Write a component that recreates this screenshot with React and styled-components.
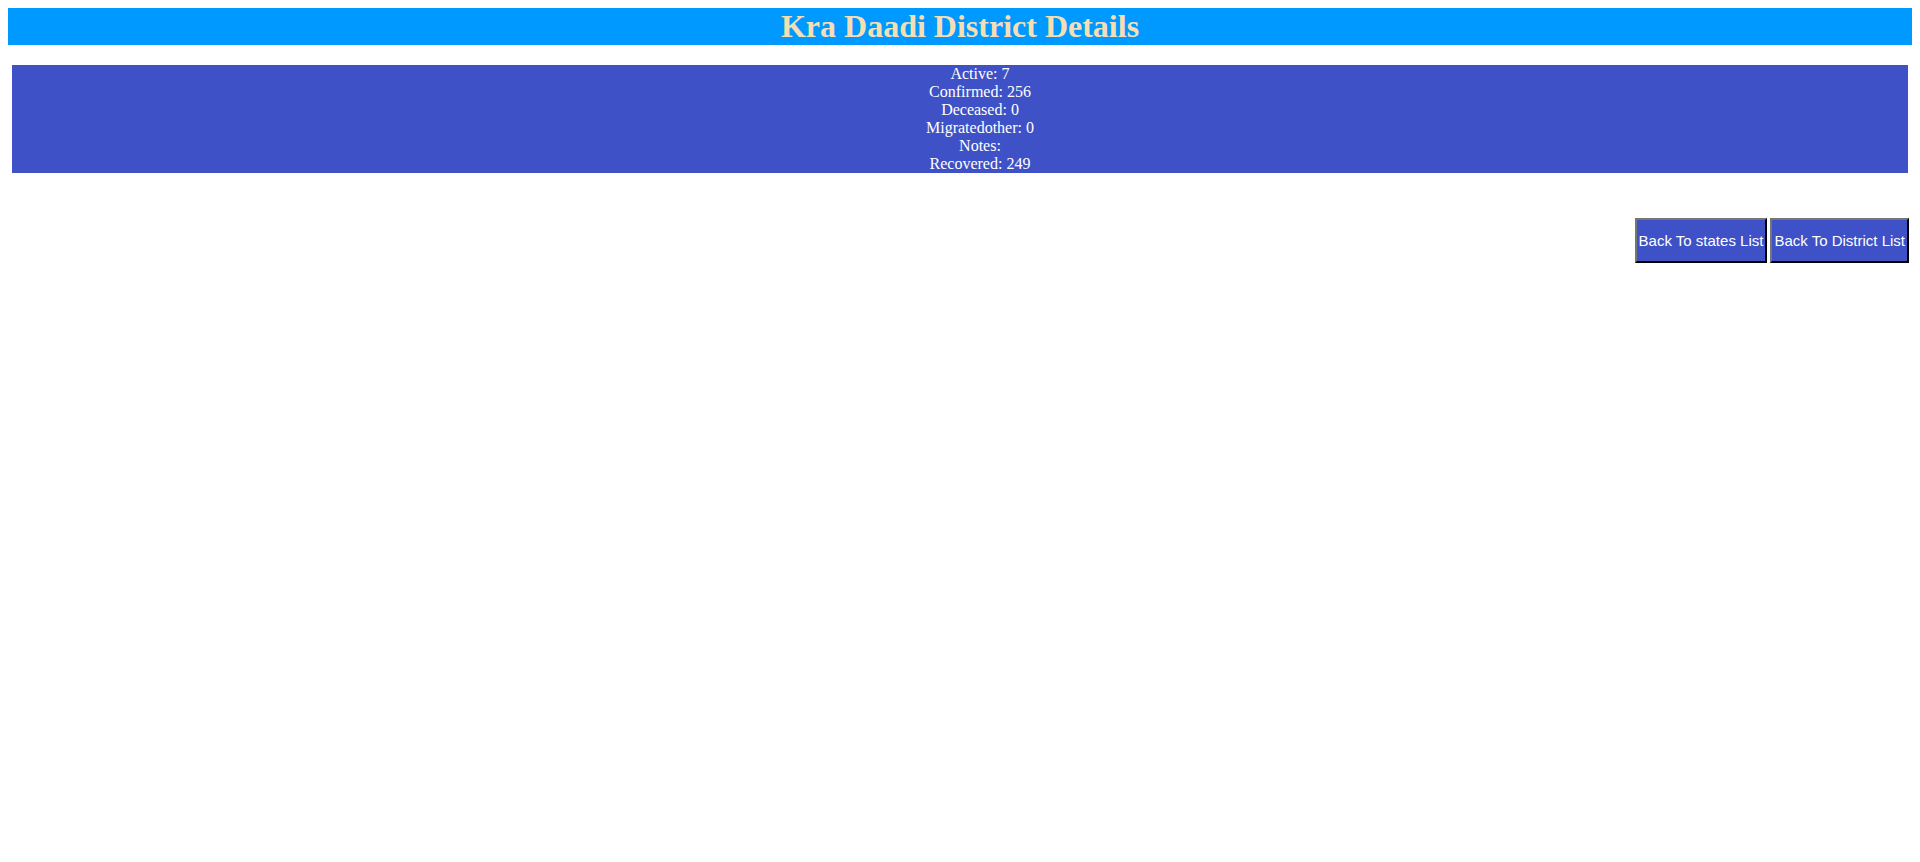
import styled, { createGlobalStyle } from 'styled-components';

const GlobalStyle = createGlobalStyle`
  body {
    margin: 8px;
    background: #ffffff;
    font-family: "Liberation Serif", "Times New Roman", serif;
  }
`;

const Header = styled.h1`
  margin: 0;
  height: 37px;
  line-height: 37px;
  background: #0099ff;
  color: #f5deb3;
  font-size: 32px;
  font-weight: 700;
  text-align: center;
`;

const StatsList = styled.ul`
  list-style: none;
  margin: 20px 4px 0;
  padding: 0 0 0 40px;
  background: #3e51c6;
  color: #ffffff;
  text-align: center;
  font-size: 16px;
  line-height: 18px;
`;

const Actions = styled.div`
  display: flex;
  justify-content: flex-end;
  gap: 3px;
  margin-top: 45px;
  padding-right: 3px;
`;

const NavButton = styled.button`
  height: 45px;
  padding: 0 2px;
  background: #3e51c6;
  color: #ffffff;
  border: 2px outset #767676;
  border-color: #767676 #222222 #222222 #767676;
  font-family: "Liberation Sans", Arial, sans-serif;
  font-size: 15px;
  cursor: pointer;
`;

const stats = [
  ['Active', 7],
  ['Confirmed', 256],
  ['Deceased', 0],
  ['Migratedother', 0],
  ['Notes', ''],
  ['Recovered', 249],
];

export default function App() {
  return (
    <>
      <GlobalStyle />
      <Header>Kra Daadi District Details</Header>
      <StatsList>
        {stats.map(([label, value]) => (
          <li key={label}>
            {label}: {value}
          </li>
        ))}
      </StatsList>
      <Actions>
        <NavButton>Back To states List</NavButton>
        <NavButton>Back To District List</NavButton>
      </Actions>
    </>
  );
}
